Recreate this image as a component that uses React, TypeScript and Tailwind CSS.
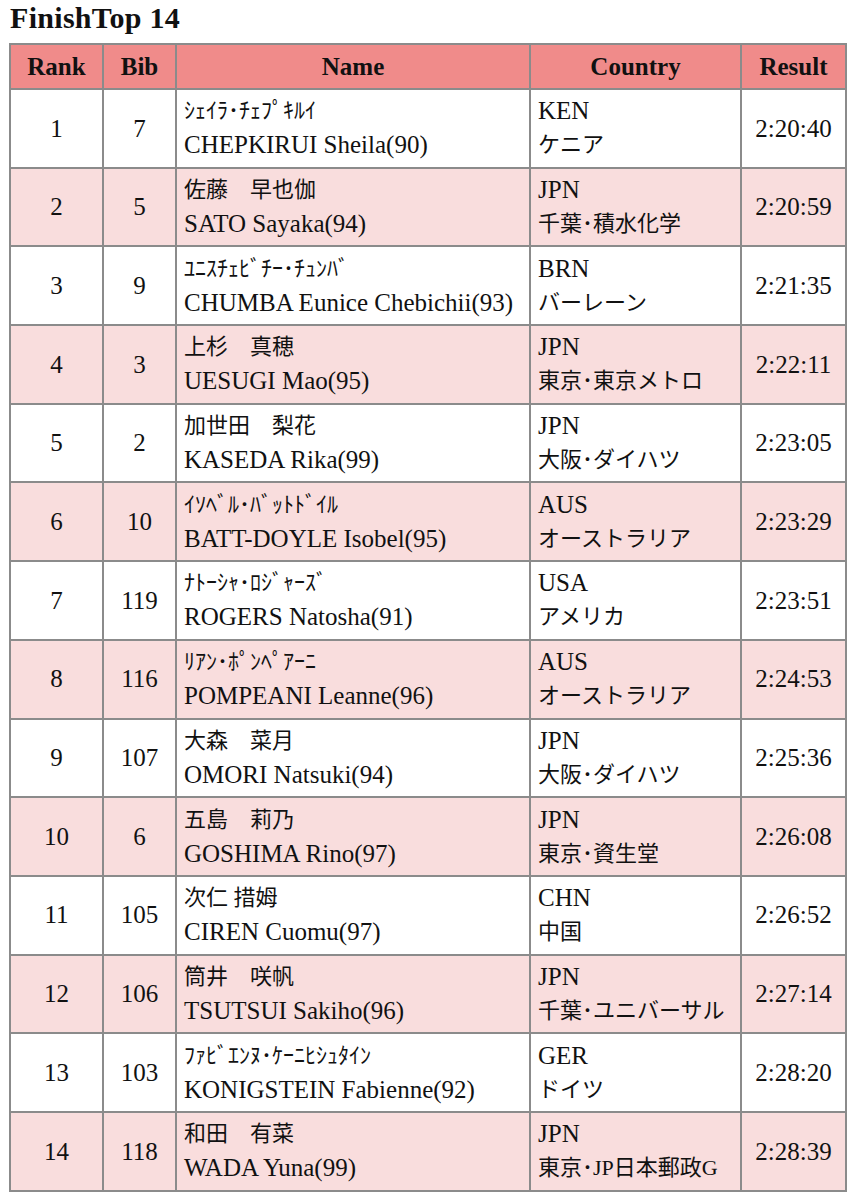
const rows = [
  ["1", "7", "ｼｪｲﾗ･ﾁｪﾌﾟｷﾙｲ", "CHEPKIRUI Sheila(90)", "KEN", "ケニア", "2:20:40"],
  ["2", "5", "佐藤　早也伽", "SATO Sayaka(94)", "JPN", "千葉･積水化学", "2:20:59"],
  ["3", "9", "ﾕﾆｽﾁｪﾋﾞﾁｰ･ﾁｭﾝﾊﾞ", "CHUMBA Eunice Chebichii(93)", "BRN", "バーレーン", "2:21:35"],
  ["4", "3", "上杉　真穂", "UESUGI Mao(95)", "JPN", "東京･東京メトロ", "2:22:11"],
  ["5", "2", "加世田　梨花", "KASEDA Rika(99)", "JPN", "大阪･ダイハツ", "2:23:05"],
  ["6", "10", "ｲｿﾍﾞﾙ･ﾊﾞｯﾄﾄﾞｲﾙ", "BATT-DOYLE Isobel(95)", "AUS", "オーストラリア", "2:23:29"],
  ["7", "119", "ﾅﾄｰｼｬ･ﾛｼﾞｬｰｽﾞ", "ROGERS Natosha(91)", "USA", "アメリカ", "2:23:51"],
  ["8", "116", "ﾘｱﾝ･ﾎﾟﾝﾍﾟｱｰﾆ", "POMPEANI Leanne(96)", "AUS", "オーストラリア", "2:24:53"],
  ["9", "107", "大森　菜月", "OMORI Natsuki(94)", "JPN", "大阪･ダイハツ", "2:25:36"],
  ["10", "6", "五島　莉乃", "GOSHIMA Rino(97)", "JPN", "東京･資生堂", "2:26:08"],
  ["11", "105", "次仁 措姆", "CIREN Cuomu(97)", "CHN", "中国", "2:26:52"],
  ["12", "106", "筒井　咲帆", "TSUTSUI Sakiho(96)", "JPN", "千葉･ユニバーサル", "2:27:14"],
  ["13", "103", "ﾌｧﾋﾞｴﾝﾇ･ｹｰﾆﾋｼｭﾀｲﾝ", "KONIGSTEIN Fabienne(92)", "GER", "ドイツ", "2:28:20"],
  ["14", "118", "和田　有菜", "WADA Yuna(99)", "JPN", "東京･JP日本郵政G", "2:28:39"],
];

const cell = "border-2 border-[#8b8b8b] align-middle";

export default function App() {
  return (
    <div className="min-h-[1200px] bg-white text-[#111] font-['Liberation_Serif','Noto_Sans_CJK_JP',serif]">
      <h1 className="pl-[10px] text-[30px] font-bold leading-[36px] tracking-[0.01em]">FinishTop 14</h1>
      <table className="mt-[7px] ml-[9px] w-[836px] table-fixed border-collapse text-[25px]">
        <colgroup>
          <col className="w-[93px]" />
          <col className="w-[73px]" />
          <col className="w-[354px]" />
          <col className="w-[211px]" />
          <col className="w-[105px]" />
        </colgroup>
        <thead>
          <tr className="h-[45px] bg-[#f08b8a] font-bold">
            <th className={cell}>Rank</th>
            <th className={cell}>Bib</th>
            <th className={cell}>Name</th>
            <th className={cell}>Country</th>
            <th className={cell}>Result</th>
          </tr>
        </thead>
        <tbody>
          {rows.map((r, i) => (
            <tr key={r[0]} className={`h-[78.7px] ${i % 2 === 1 ? "bg-[#f9dddd]" : "bg-white"}`}>
              <td className={`${cell} text-center`}>{r[0]}</td>
              <td className={`${cell} text-center`}>{r[1]}</td>
              <td className={`${cell} px-[7px] leading-[34px] whitespace-nowrap`}>
                <div className="text-[22px]">{r[2]}</div>
                <div>{r[3]}</div>
              </td>
              <td className={`${cell} px-[7px] leading-[34px] whitespace-nowrap`}>
                <div>{r[4]}</div>
                <div className="text-[22px]">{r[5]}</div>
              </td>
              <td className={`${cell} text-center`}>{r[6]}</td>
            </tr>
          ))}
        </tbody>
      </table>
    </div>
  );
}
